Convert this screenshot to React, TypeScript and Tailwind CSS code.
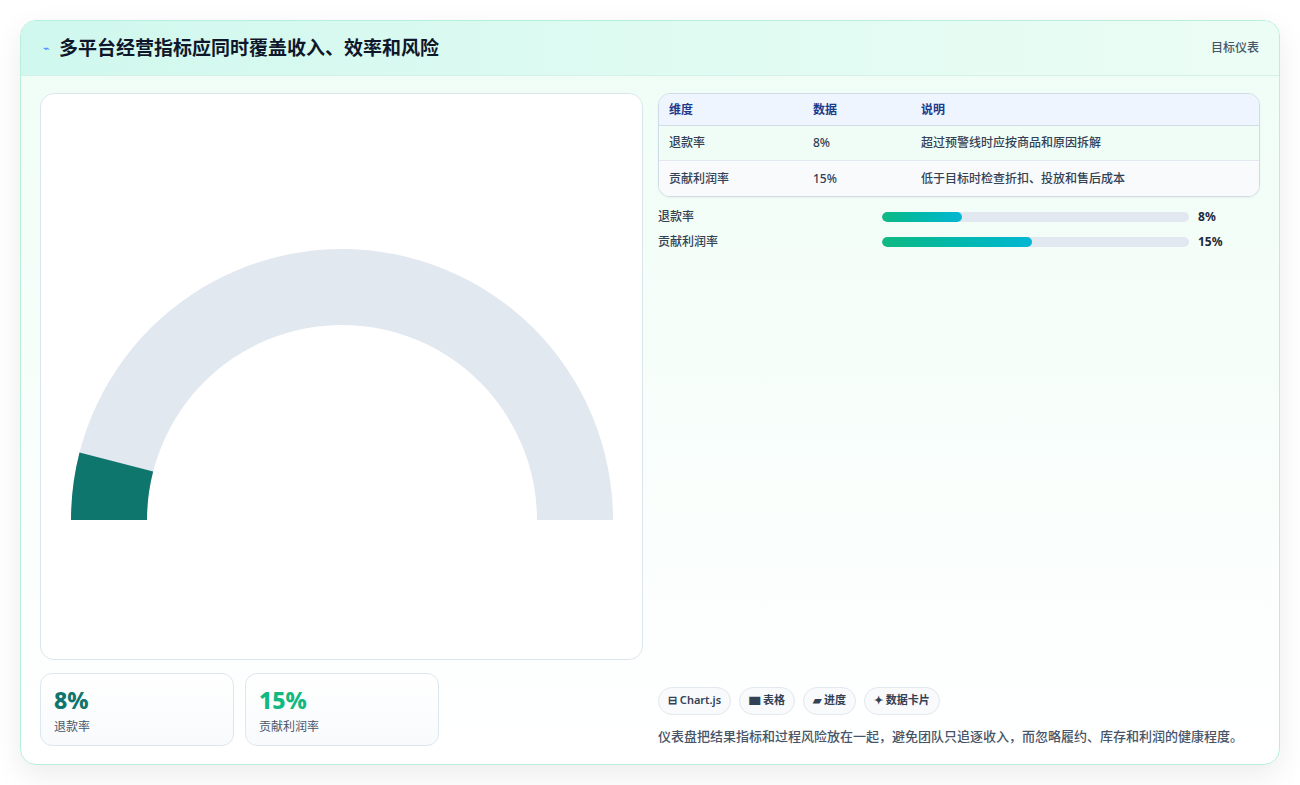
import React from "react";

const font = { fontFamily: '"Noto Sans", "Noto Sans CJK SC", sans-serif' };

function Gauge() {
  const cx = 300, cy = 300, R = 271, r = 195;
  const frac = 0.08;
  const a = Math.PI * (1 - frac);
  const pt = (rad: number, ang: number) => [cx + rad * Math.cos(ang), cy - rad * Math.sin(ang)];
  const [x1, y1] = pt(R, a);
  const [x2, y2] = pt(r, a);
  const bg = `M ${cx - R} ${cy} A ${R} ${R} 0 0 1 ${cx + R} ${cy} L ${cx + r} ${cy} A ${r} ${r} 0 0 0 ${cx - r} ${cy} Z`;
  const fg = `M ${cx - R} ${cy} A ${R} ${R} 0 0 1 ${x1} ${y1} L ${x2} ${y2} A ${r} ${r} 0 0 0 ${cx - r} ${cy} Z`;
  return (
    <svg width="600" height="310" viewBox="0 0 600 310">
      <path d={bg} fill="#e2e8f0" />
      <path d={fg} fill="#0f766e" />
    </svg>
  );
}

export default function App() {
  const rows = [
    ["退款率", "8%", "超过预警线时应按商品和原因拆解"],
    ["贡献利润率", "15%", "低于目标时检查折扣、投放和售后成本"],
  ];
  const bars = [
    ["退款率", 8, 26],
    ["贡献利润率", 15, 49],
  ] as const;
  return (
    <div style={font} className="w-[1300px] h-[785px] bg-white pt-[20px] px-[20px]">
      <div className="w-[1260px] h-[745px] rounded-[16px] border border-[#b7eedc] shadow-[0_10px_30px_rgba(0,0,0,0.08)] overflow-hidden bg-gradient-to-b from-[#effdf6] to-white flex flex-col">
        <div className="h-[55px] shrink-0 flex items-center justify-between pl-[22px] pr-[20px] bg-gradient-to-r from-[#d0f8ee] to-[#ecfdf5] border-b border-[#d3f1e8]">
          <div className="flex items-center gap-[9px]">
            <span className="text-[#3b82f6] text-[11px]">⌁</span>
            <span className="text-[19px] font-bold text-[#0f172a]">多平台经营指标应同时覆盖收入、效率和风险</span>
          </div>
          <span className="text-[12px] text-[#475569] font-medium">目标仪表</span>
        </div>
        <div className="flex-1 flex gap-[15px] pt-[17px] px-[19px] pb-[18px]">
          <div className="w-[603px] flex flex-col gap-[13px]">
            <div className="h-[567px] bg-white rounded-[14px] border border-[#dbe5ee] flex items-start justify-center pt-[126px]">
              <Gauge />
            </div>
            <div className="flex gap-[11px]">
              {[["8%", "退款率", "text-[#0f766e]"], ["15%", "贡献利润率", "text-[#10b981]"]].map(([v, l, c]) => (
                <div key={l} className="w-[194px] h-[73px] rounded-[12px] border border-[#dde7f0] bg-gradient-to-b from-white to-[#f8fafc] px-[13px] pt-[12px]">
                  <div className={`text-[23px] font-extrabold leading-[28px] ${c}`}>{v}</div>
                  <div className="text-[12px] text-[#475569] mt-[4px]">{l}</div>
                </div>
              ))}
            </div>
          </div>
          <div className="flex-1 flex flex-col">
            <div className="rounded-[12px] border border-[#cfdbe6] overflow-hidden text-[12px] shadow-[0_1px_2px_rgba(0,0,0,0.05)]">
              <div className="h-[32px] bg-[#eef5ff] flex items-center px-[10px] font-semibold text-[#1e3a8a] border-b border-[#d2dde8]">
                <span className="w-[144px]">维度</span><span className="w-[108px]">数据</span><span>说明</span>
              </div>
              {rows.map((r, i) => (
                <div key={i} className={`h-[35px] flex items-center px-[10px] text-[#334155] font-medium ${i === 0 ? "bg-[#f0fdf6] border-b border-[#e2e8f0]" : "bg-[#f8fafc]"}`}>
                  <span className="w-[144px]">{r[0]}</span><span className="w-[108px]">{r[1]}</span><span>{r[2]}</span>
                </div>
              ))}
            </div>
            <div className="mt-[12px] flex flex-col gap-[9px]">
              {bars.map(([l, v, w]) => (
                <div key={l} className="flex items-center h-[16px] text-[12px]">
                  <span className="w-[224px] text-[#334155] font-medium">{l}</span>
                  <div className="w-[307px] h-[10px] rounded-full bg-[#e2e8f0] overflow-hidden">
                    <div className="h-full rounded-full bg-gradient-to-r from-[#10b981] to-[#06b6d4]" style={{ width: `${w}%` }} />
                  </div>
                  <span className="ml-[9px] font-bold text-[#1e293b]">{v}%</span>
                </div>
              ))}
            </div>
            <div className="flex-1" />
            <div className="flex gap-[8px] text-[11px] font-semibold text-[#334155]">
              {["⊟ Chart.js", "▆ 表格", "▰ 进度", "✦ 数据卡片"].map((t) => (
                <span key={t} className="h-[28px] px-[9px] flex items-center rounded-full border border-[#e2e8f0] bg-[#f8fafc]">{t}</span>
              ))}
            </div>
            <div className="mt-[12px] text-[13px] text-[#475569] font-medium">仪表盘把结果指标和过程风险放在一起，避免团队只追逐收入，而忽略履约、库存和利润的健康程度。</div>
          </div>
        </div>
      </div>
    </div>
  );
}
